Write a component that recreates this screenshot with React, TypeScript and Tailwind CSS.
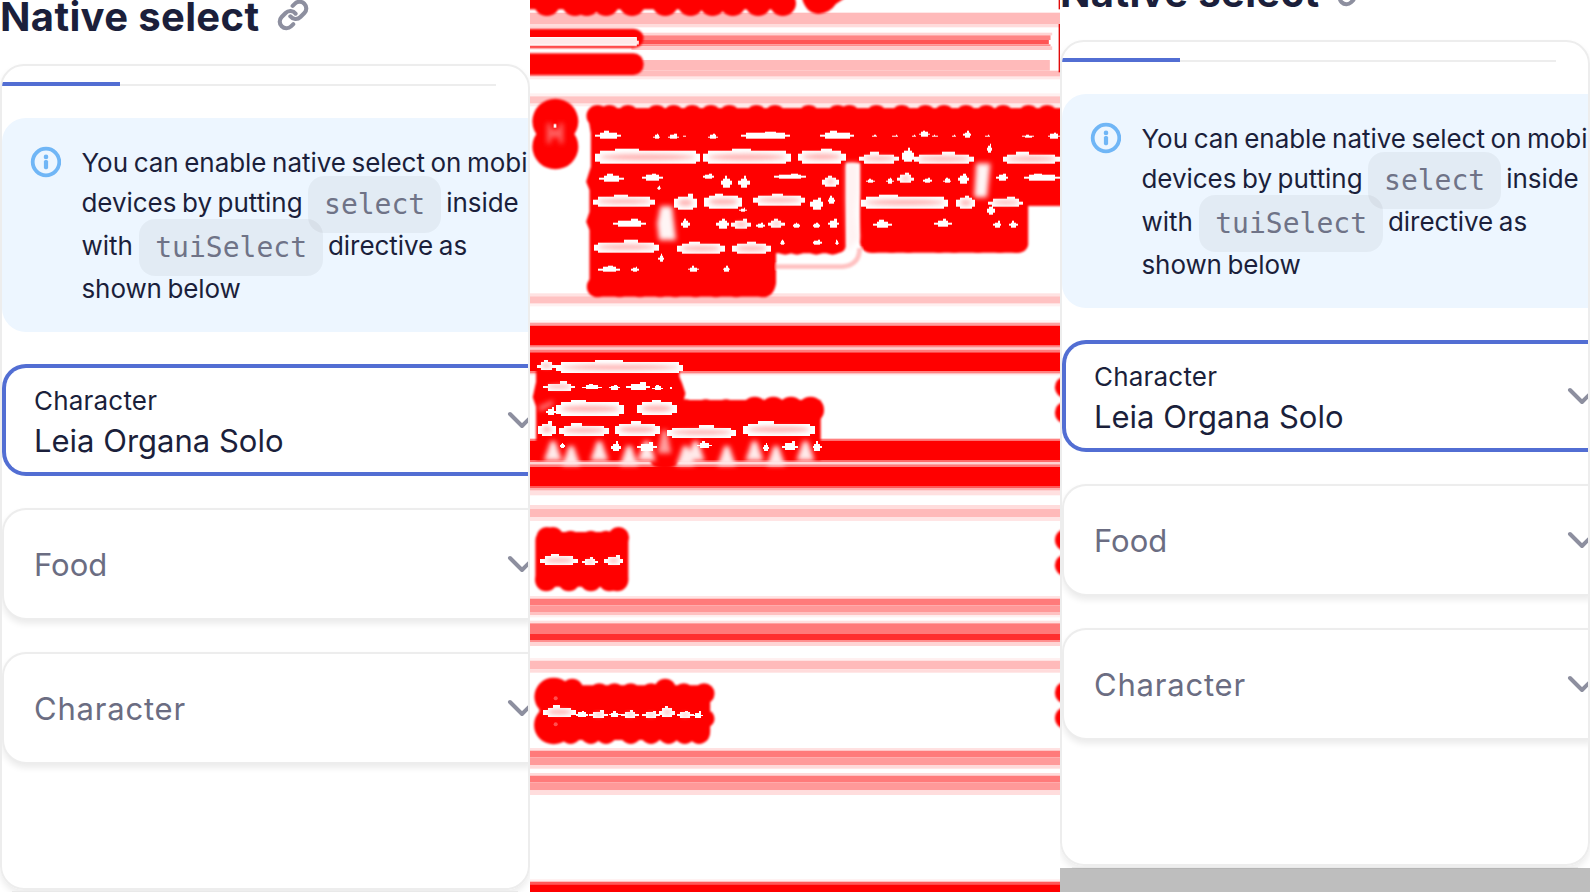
import { Link } from 'lucide-react';

type Box = [number, number, number, number];

function Chevron() {
  return (
    <svg className="ml-auto mr-[-18px] h-8 w-8 shrink-0" viewBox="0 0 32 32" fill="none" stroke="#8d8f9f" strokeWidth="4" strokeLinecap="round" strokeLinejoin="round">
      <path d="M4 10 16 22 28 10" />
    </svg>
  );
}

function InfoIcon() {
  return (
    <svg className="mt-[26px] ml-[27px] h-9 w-8 shrink-0" viewBox="0 0 32 36">
      <circle cx="17" cy="18" r="13.3" fill="none" stroke="#70b6f6" strokeWidth="3.8" />
      <circle cx="17" cy="12.9" r="2.3" fill="#70b6f6" />
      <rect x="14.9" y="16" width="4.2" height="9.2" rx="1.6" fill="#70b6f6" />
    </svg>
  );
}

function Code({ children }: { children: string }) {
  return (
    <code className="ml-[5.5px] mr-[5px] rounded-2xl bg-black/[0.043] px-4 py-3 align-[-1.5px] font-['DejaVu_Sans_Mono',monospace] text-[28px] tracking-normal text-[#6f7387]">
      {children}
    </code>
  );
}

function EmptySelect({ label, wide }: { label: string; wide?: boolean }) {
  return (
    <div className="mt-8 flex h-28 w-[530px] shrink-0 items-center rounded-l-3xl border-y-2 border-l-2 border-[#ededed] bg-white pl-[30px] pr-3 shadow-[0_4px_6px_rgba(0,0,0,0.08)]">
      <span className={wide ? 'pt-px text-[31px] leading-[40px] tracking-[0.8px] text-[#6b6d82]' : 'pt-px text-[31px] leading-[40px] text-[#6b6d82]'}>{label}</span>
      <Chevron />
    </div>
  );
}

function Page() {
  return (
    <div className="flex h-[892px] w-[530px] shrink-0 flex-col bg-white text-[#1b1f3b]">
      <div className="flex h-16 shrink-0 items-start">
        <h2 className="text-[40px] font-bold leading-[33px] tracking-[0.35px]">Native select</h2>
        <Link className="ml-[18px] mt-[-1px] h-8 w-8 shrink-0" color="#8d8f9f" strokeWidth={3.1} />
      </div>
      <div className="flex h-[826px] shrink-0 flex-col overflow-hidden rounded-3xl border-2 border-[#ededed] shadow-[0_4px_6px_rgba(0,0,0,0.08)]">
        <div className="mt-4 flex h-1 w-[494px] shrink-0 items-end">
          <div className="h-1 w-[118px] bg-[#526ed3]" />
          <div className="h-0.5 flex-1 bg-[#ededed]" />
        </div>
        <div className="mt-8 flex h-[214px] w-[560px] shrink-0 rounded-3xl bg-[#edf6ff]">
          <InfoIcon />
          <div className="ml-[20.5px] pt-[25px] text-[26px] leading-[40px] tracking-[-0.05px] [word-spacing:-1.6px]">
            <div className="h-10">You can enable native select on mobi</div>
            <div className="h-[43px]">devices by putting<Code>select</Code>inside</div>
            <div className="h-[43px]">with<span className="pl-px" /><Code>tuiSelect</Code>directive as</div>
            <div className="h-10 tracking-[-0.1px]">shown below</div>
          </div>
        </div>
        <div className="mt-8 flex h-28 w-[530px] shrink-0 items-center rounded-l-3xl border-y-4 border-l-4 border-[#526ed3] pl-7 pr-3">
          <div className="flex flex-col pt-px">
            <span className="text-[26px] leading-[40px] tracking-[0.2px]">Character</span>
            <span className="text-[31px] leading-[40px]">Leia Organa Solo</span>
          </div>
          <Chevron />
        </div>
        <EmptySelect label="Food" />
        <EmptySelect label="Character" wide />
      </div>
      <div className="mx-3 mt-px h-px shrink-0 bg-[#e9e9e9]" />
    </div>
  );
}

const RED = '#ff0404';

/* Horizontal bands: y, height, colour, start, end */
type Band = [number, number, string, number, number];

function Bands({ items }: { items: Band[] }) {
  return (
    <g filter="url(#band)">
      {items.map(([y, h, c, a, b], i) => (
        <rect key={i} x={a || -30} y={y} width={(b === 1568 ? 1600 : b) - (a || -30)} height={h} fill={c} />
      ))}
    </g>
  );
}

/* Rows of discs that give the dilated regions their scalloped edges */
function Discs({ xs, y, r }: { xs: number[]; y: number; r: number }) {
  return (
    <>
      {xs.map((x) => (
        <circle key={x} cx={x} cy={y} r={r} fill={RED} />
      ))}
    </>
  );
}

function Holes({ items, tint }: { items: Box[]; tint?: boolean }) {
  return (
    <>
      {items.map(([x, y, w, h], i) => {
        const s = Math.min(h / 4, 7);
        const n = Math.min(w / 5, 14);
        const k = (i % 3) * 0.12;
        return (
          <g key={i}>
            <path
              d={`M${x} ${y + h - s}v${-(h - 3 * s)}h${n}v${-s}h${w * (0.15 + k)}v${-s}h${w * 0.22}v${s}h${w * (0.63 - k) - 2 * n}v${s}h${n}v${h - 3 * s}h${-n}v${s}h${-(w - 2 * n)}v${-s}z`}
              fill="#fff"
              shapeRendering="crispEdges"
            />
            {tint && w > 40 && (
              <ellipse cx={x + w / 2} cy={y + h / 2 + 2} rx={w / 2 - 14} ry={h / 5} fill="#ffa8a8" opacity=".85" filter="url(#tint)" />
            )}
          </g>
        );
      })}
    </>
  );
}

const topHoles: Box[] = [
  [192, 392, 78, 24], [364, 402, 22, 14], [408, 402, 32, 14], [453, 406, 10, 5], [527, 402, 30, 14], [624, 394, 145, 22],
  [858, 392, 102, 24], [1012, 404, 15, 7], [1070, 404, 20, 7], [1150, 392, 34, 18], [1282, 392, 24, 20], [1346, 404, 16, 7], [1456, 404, 36, 8], [1532, 398, 36, 18],
  [1130, 405, 12, 6], [1190, 405, 16, 6], [1248, 405, 12, 6], [1352, 430, 16, 28],
  [204, 520, 74, 24], [330, 520, 64, 22], [512, 520, 32, 16], [565, 528, 32, 34], [616, 528, 34, 34], [723, 520, 94, 16],
  [995, 535, 26, 14], [1054, 532, 22, 18], [1162, 532, 26, 16], [1222, 534, 24, 14], [1267, 520, 32, 30], [1380, 520, 34, 22], [1462, 520, 106, 22], [376, 556, 12, 14],
  [247, 655, 95, 24], [446, 655, 27, 28], [550, 655, 40, 30], [668, 668, 26, 15], [778, 668, 22, 15], [836, 668, 22, 15], [882, 655, 32, 27],
  [1014, 658, 56, 24], [1196, 656, 52, 24], [1370, 662, 24, 20], [1418, 662, 26, 20],
  [740, 720, 14, 14], [836, 718, 28, 16], [902, 720, 12, 14], [202, 796, 64, 20], [300, 800, 22, 15], [468, 798, 32, 16], [571, 798, 21, 16],
  [618, 622, 24, 14], [882, 588, 20, 24], [380, 760, 16, 24], [1352, 612, 24, 32],
];
const topTinted: Box[] = [
  [192, 446, 312, 46], [512, 446, 260, 46], [792, 446, 142, 44], [974, 456, 118, 34], [1100, 444, 36, 42], [1136, 456, 178, 36], [1398, 456, 170, 36],
  [186, 584, 184, 36], [425, 582, 70, 48], [516, 580, 112, 46], [660, 580, 155, 36], [828, 592, 40, 36],
  [980, 584, 258, 42], [1260, 586, 58, 40], [1356, 590, 104, 30], [864, 526, 50, 34], [1086, 518, 50, 30],
  [188, 720, 194, 38], [436, 724, 140, 38], [598, 724, 114, 38], [594, 655, 60, 32], [704, 655, 50, 28],
];
const midTinted: Box[] = [
  [20, 150, 58, 30], [78, 150, 376, 40], [38, 214, 96, 28], [78, 270, 200, 48], [316, 270, 118, 46],
  [24, 334, 52, 44], [86, 340, 148, 38], [250, 334, 134, 44], [406, 346, 202, 38], [630, 334, 212, 44],
];
const midHoles: Box[] = [
  [154, 222, 58, 16], [234, 224, 32, 15], [284, 216, 72, 24], [362, 226, 32, 14], [414, 230, 6, 6], [46, 290, 30, 26],
  [90, 398, 14, 16], [240, 394, 28, 30], [316, 396, 60, 26], [494, 394, 44, 20], [688, 398, 20, 24], [746, 394, 48, 26], [836, 394, 28, 28],
];

function Heatmap() {
  const all = 1568;
  return (
    <svg className="block h-[892px] w-[530px] shrink-0" viewBox="0 0 530 892">
      <defs>
        <filter id="band" x="0" y="-5%" width="100%" height="110%">
          <feGaussianBlur stdDeviation="0.5 2.2" />
        </filter>
        <filter id="soft" x="-20%" y="-20%" width="140%" height="140%">
          <feGaussianBlur stdDeviation="8" />
        </filter>
        <filter id="tint" x="-40%" y="-150%" width="180%" height="400%">
          <feGaussianBlur stdDeviation="6" />
        </filter>
        <filter id="edge" x="-5%" y="-5%" width="110%" height="110%">
          <feGaussianBlur stdDeviation="3.5" />
        </filter>
      </defs>
      <rect width="530" height="892" fill="#ffffff" />

      <g transform="scale(0.338 0.33333)">
        <Bands items={[
          [38, 34, '#ffbaba', 0, all], [72, 10, '#ffdcdc', 0, all],
          [98, 8, '#ffd4d4', 300, 1545], [106, 14, '#ff8585', 300, 1540], [120, 13, '#ff5555', 300, 1535], [133, 6, '#ff8d8d', 300, 1540], [139, 11, '#ffcaca', 300, 1545],
          [180, 32, '#ffbaba', 300, 1538], [212, 18, '#ffbcbc', 0, all], [230, 8, '#ffe8e8', 0, all],
          [280, 9, '#fff0f0', 0, all], [289, 22, '#ffc4c4', 0, all], [311, 8, '#ffeaea', 0, all],
          [880, 9, '#ffe2e2', 0, all], [889, 22, '#ffc2c2', 0, all], [911, 8, '#fff0f0', 0, all],
        ]} />
        <g filter="url(#edge)">
          <rect x="-30" y="-30" width="800" height="58" fill={RED} />
          <Discs xs={[50, 133, 168, 225, 302, 400, 475, 540, 600, 675, 748]} y={9} r={39} />
          <path d="M806 -30V0Q820 42 855 42Q888 38 905 12L935 -8V-30Z" fill={RED} />
          <rect x="-40" y="86" width="376" height="58" rx="30" fill={RED} />
          <rect x="-40" y="160" width="376" height="65" rx="30" fill={RED} />
          <circle cx="75" cy="364" r="68" fill={RED} />
          <circle cx="75" cy="440" r="68" fill={RED} />
          <path d="M190 324H1600V618H1474V735Q1470 758 1440 758H1010Q980 758 976 728V490H935V740Q930 760 900 760H728V850Q722 890 690 890H200Q174 885 176 850V690L166 665L176 635V570L166 545L180 500V400L170 340Z" fill={RED} />
          <Discs xs={[200, 235, 290, 375, 425, 480, 535, 590, 670, 725, 825, 910, 945, 1025, 1100, 1170, 1225, 1290, 1350, 1400, 1475, 1530]} y={348} r={33} />
          <Discs xs={[200, 265, 325, 385, 430, 490, 550, 610, 690]} y={860} r={32} />
          <Discs xs={[755, 790, 847, 895]} y={730} r={34} />
          <Discs xs={[1015, 1070, 1120, 1210, 1255, 1325, 1390, 1440]} y={726} r={33} />
          <path d="M728 800H925Q975 795 975 745" fill="none" stroke="#ffc2c2" strokeWidth="14" />
        </g>
        <g filter="url(#soft)">
          <path d="M935 490H970V580L962 640L972 715L940 755L935 600Z" fill="#fff2f2" />
          <path d="M1320 490H1362L1352 592H1314Z" fill="#fff5f5" />
          <path d="M386 618H420L432 720H382L376 670Z" fill="#fff5f5" />
          <path d="M50 370h12v18h24v-18h12v60H86v-18H62v18H50z" fill="#ff6a6a" opacity=".9" />
        </g>
        <rect x="0" y="110" width="316" height="28" fill="#fff" />
        <path d="M0 114H316V122H322V133H0Z" fill="#ffe8e8" />
        <rect x="70" y="372" width="8" height="11" fill="#fff" />
        <Holes items={topHoles} />
        <Holes items={topTinted} tint />
        <rect x="1564" y="0" width="4" height="28" fill="#e00a0a" />
        <rect x="1564" y="72" width="4" height="145" fill="#e00a0a" />
      </g>

      <g transform="translate(0 310) scale(0.338 0.33333)">
        <Bands items={[
          [30, 8, '#fff4f4', 0, all], [38, 9, '#ff9f9f', 0, all], [47, 60, RED, 0, all], [107, 6, '#ff8888', 0, all], [113, 6, '#ffcece', 0, all], [119, 8, '#ff7d7d', 0, all],
          [127, 56, RED, 0, all], [183, 8, '#ff8080', 0, all], [191, 5, '#ffe8e8', 0, all],
          [386, 6, '#ff8080', 0, all], [392, 58, RED, 0, all], [450, 7, '#ff6a6a', 0, all], [457, 6, '#ffd4d4', 0, all], [463, 8, '#ff7b7b', 0, all],
          [471, 57, RED, 0, all], [528, 6, '#ff5757', 0, all], [534, 8, '#ffaaaa', 0, all], [542, 14, '#ffe0e0', 0, all],
          [585, 12, '#ffdcdc', 0, all], [597, 24, '#ffbaba', 0, all], [621, 12, '#ffe5e5', 0, all],
        ]} />
        <g filter="url(#edge)">
          <path d="M18 140H442V200L450 220L460 250L455 270H860V450H18V290L8 262L18 215Z" fill={RED} />
          <Discs xs={[460, 520, 580]} y={304} r={36} />
          <Discs xs={[665, 720, 772, 830]} y={300} r={40} />
          <ellipse cx="398" cy="452" rx="42" ry="24" fill={RED} />
          <rect x="16" y="666" width="275" height="164" rx="24" fill={RED} />
          <Discs xs={[50, 68, 262]} y={682} r={31} />
          <Discs xs={[120, 180, 225]} y={692} r={30} />
          <Discs xs={[48, 115, 180, 235, 258]} y={811} r={33} />
          {[232, 308, 690, 766].map((y) => <ellipse key={y} cx="1582" cy={y} rx="29" ry="32" fill={RED} />)}
        </g>
        <g filter="url(#soft)">
          {[68, 122, 205, 293, 345, 460, 490, 582, 664, 728, 815].map((x, i) => (
            <path key={x} d={`M${x - 7} ${i % 2 ? 408 : 394}h14l20 58h-54z`} fill="#ffeaea" />
          ))}
          <path d="M24 290L68 270V284L30 304Z" fill="#ff7777" />
          <path d="M392 360h12l14 70h-40z" fill="#ff9f9f" />
        </g>
        <Holes items={midTinted} tint />
        <Holes items={midHoles} />
        <Holes tint items={[[30, 732, 112, 34], [154, 740, 47, 26], [220, 734, 56, 32]]} />
      </g>

      <g transform="translate(0 590) scale(0.338 0.33333)">
        <Bands items={[
          [18, 8, '#ffe3e3', 0, all], [26, 20, '#ff7a7a', 0, all], [46, 20, '#ff9898', 0, all], [66, 10, '#ffc2c2', 0, all], [76, 6, '#fff0f0', 0, all],
          [92, 8, '#ffe0e0', 0, all], [100, 32, '#ff7979', 0, all], [132, 18, '#ff2d2d', 0, all], [150, 6, '#ff8f8f', 0, all], [156, 12, '#ffd5d5', 0, all],
          [204, 8, '#fff0f0', 0, all], [212, 26, '#ffbaba', 0, all], [238, 10, '#ffdcdc', 0, all],
          [474, 8, '#ffe1e1', 0, all], [482, 20, '#ff7a7a', 0, all], [502, 24, '#ff9a9a', 0, all], [526, 10, '#ffdada', 0, all],
          [549, 8, '#ffdada', 0, all], [557, 20, '#ff7a7a', 0, all], [577, 24, '#ff9999', 0, all], [601, 14, '#ffdddd', 0, all],
          [868, 7, '#ffecec', 0, all], [875, 8, '#ff5757', 0, all], [883, 40, '#ff0000', 0, all],
        ]} />
        <g filter="url(#edge)">
          <rect x="28" y="286" width="505" height="164" rx="24" fill={RED} />
          <Discs xs={[70]} y={320} r={57} />
          <Discs xs={[70]} y={405} r={58} />
          <Discs xs={[125, 400]} y={298} r={32} />
          <Discs xs={[205, 250, 298, 358, 455, 515]} y={311} r={31} />
          <Discs xs={[120, 180, 225, 298, 358, 410, 458, 500]} y={430} r={32} />
          <circle cx="519" cy="386" r="27" fill={RED} />
          {[308, 384].map((y) => <ellipse key={y} cx="1582" cy={y} rx="29" ry="32" fill={RED} />)}
        </g>
        <Holes tint items={[[38, 346, 98, 36], [136, 362, 36, 20], [176, 360, 54, 24], [234, 364, 34, 16], [270, 360, 52, 24], [332, 362, 52, 22], [382, 348, 48, 34], [434, 362, 50, 22], [484, 364, 28, 20]]} />
        <circle cx="76" cy="325" r="6" fill="#ff4f4f" />
        <circle cx="76" cy="403" r="6" fill="#ff4f4f" />
      </g>
    </svg>
  );
}

export default function App() {
  return (
    <div className="flex h-[892px] w-[1590px] overflow-hidden whitespace-nowrap bg-white font-['Inter',sans-serif]">
      <div className="w-[530px] overflow-hidden">
        <Page />
      </div>
      <Heatmap />
      <div className="flex w-[530px] flex-col overflow-hidden bg-[#bebebe]">
        <div className="h-[869px] shrink-0 overflow-hidden">
          <div className="-mt-6">
            <Page />
          </div>
        </div>
      </div>
    </div>
  );
}
